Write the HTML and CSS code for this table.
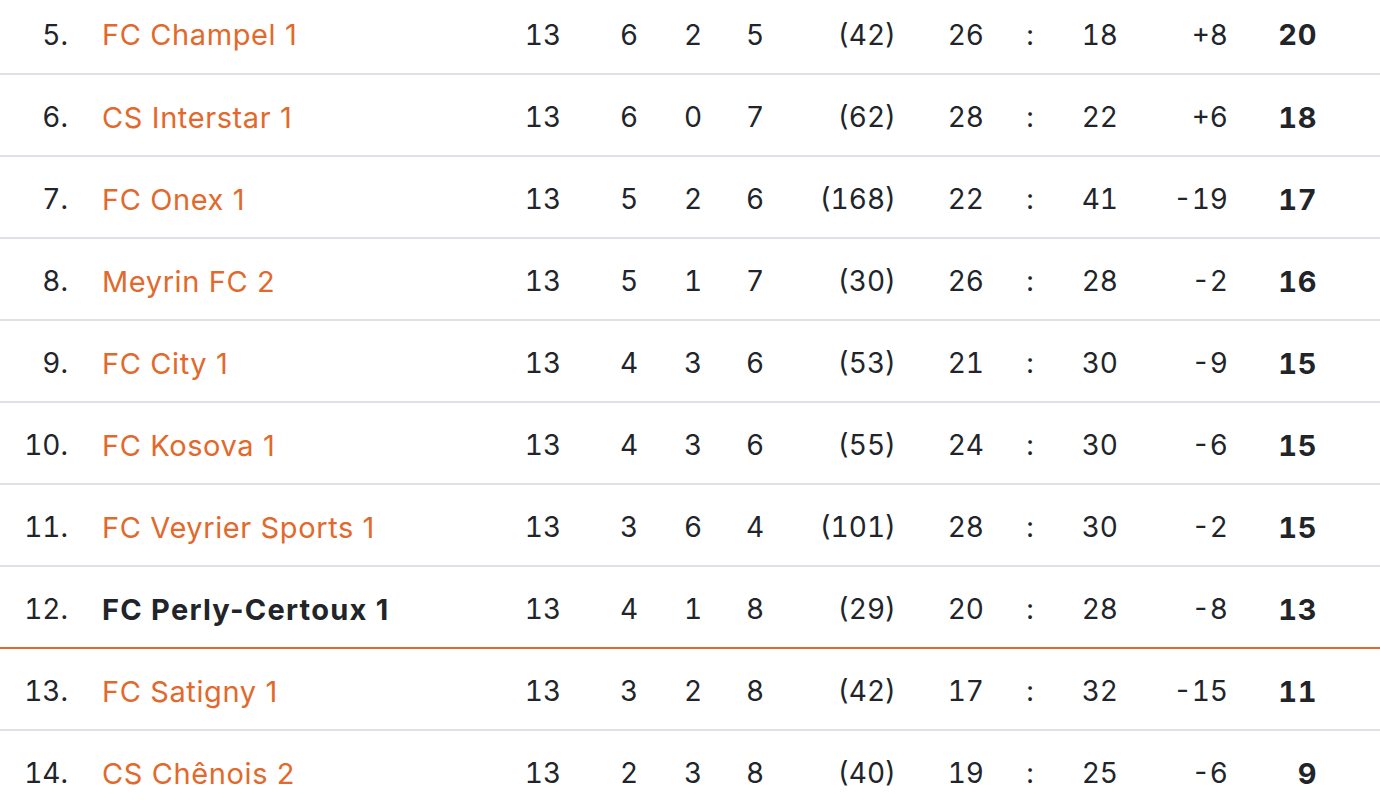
FILE: index.html
```html
<!DOCTYPE html>
<html lang="fr">
<head>
<meta charset="utf-8">
<title>Classement</title>
<link rel="stylesheet" href="styles.css">
</head>
<body>
<table class="standings">
  <colgroup>
    <col class="c-rank"><col class="c-team"><col class="c-p"><col class="c-w"><col class="c-d"><col class="c-l"><col class="c-fp"><col class="c-gf"><col class="c-colon"><col class="c-ga"><col class="c-diff"><col class="c-pts">
  </colgroup>
  <tbody>
    <tr><td class="rank">5.</td><td class="team"><a href="#">FC Champel 1</a></td><td class="ctr">13</td><td class="ctr">6</td><td class="ctr">2</td><td class="ctr">5</td><td class="num">(42)</td><td class="num">26</td><td class="ctr">:</td><td class="num">18</td><td class="num">+8</td><td class="pts">20</td></tr>
    <tr><td class="rank">6.</td><td class="team"><a href="#">CS Interstar 1</a></td><td class="ctr">13</td><td class="ctr">6</td><td class="ctr">0</td><td class="ctr">7</td><td class="num">(62)</td><td class="num">28</td><td class="ctr">:</td><td class="num">22</td><td class="num">+6</td><td class="pts">18</td></tr>
    <tr><td class="rank">7.</td><td class="team"><a href="#">FC Onex 1</a></td><td class="ctr">13</td><td class="ctr">5</td><td class="ctr">2</td><td class="ctr">6</td><td class="num">(168)</td><td class="num">22</td><td class="ctr">:</td><td class="num">41</td><td class="num">-19</td><td class="pts">17</td></tr>
    <tr><td class="rank">8.</td><td class="team"><a href="#">Meyrin FC 2</a></td><td class="ctr">13</td><td class="ctr">5</td><td class="ctr">1</td><td class="ctr">7</td><td class="num">(30)</td><td class="num">26</td><td class="ctr">:</td><td class="num">28</td><td class="num">-2</td><td class="pts">16</td></tr>
    <tr><td class="rank">9.</td><td class="team"><a href="#">FC City 1</a></td><td class="ctr">13</td><td class="ctr">4</td><td class="ctr">3</td><td class="ctr">6</td><td class="num">(53)</td><td class="num">21</td><td class="ctr">:</td><td class="num">30</td><td class="num">-9</td><td class="pts">15</td></tr>
    <tr><td class="rank">10.</td><td class="team"><a href="#">FC Kosova 1</a></td><td class="ctr">13</td><td class="ctr">4</td><td class="ctr">3</td><td class="ctr">6</td><td class="num">(55)</td><td class="num">24</td><td class="ctr">:</td><td class="num">30</td><td class="num">-6</td><td class="pts">15</td></tr>
    <tr><td class="rank">11.</td><td class="team"><a href="#">FC Veyrier Sports 1</a></td><td class="ctr">13</td><td class="ctr">3</td><td class="ctr">6</td><td class="ctr">4</td><td class="num">(101)</td><td class="num">28</td><td class="ctr">:</td><td class="num">30</td><td class="num">-2</td><td class="pts">15</td></tr>
    <tr class="own cutoff"><td class="rank">12.</td><td class="team"><span class="own-name">FC Perly-Certoux 1</span></td><td class="ctr">13</td><td class="ctr">4</td><td class="ctr">1</td><td class="ctr">8</td><td class="num">(29)</td><td class="num">20</td><td class="ctr">:</td><td class="num">28</td><td class="num">-8</td><td class="pts">13</td></tr>
    <tr><td class="rank">13.</td><td class="team"><a href="#">FC Satigny 1</a></td><td class="ctr">13</td><td class="ctr">3</td><td class="ctr">2</td><td class="ctr">8</td><td class="num">(42)</td><td class="num">17</td><td class="ctr">:</td><td class="num">32</td><td class="num">-15</td><td class="pts">11</td></tr>
    <tr><td class="rank">14.</td><td class="team"><a href="#">CS Chênois 2</a></td><td class="ctr">13</td><td class="ctr">2</td><td class="ctr">3</td><td class="ctr">8</td><td class="num">(40)</td><td class="num">19</td><td class="ctr">:</td><td class="num">25</td><td class="num">-6</td><td class="pts">9</td></tr>
  </tbody>
</table>
</body>
</html>
```
FILE: styles.css
```css
html, body {
  margin: 0;
  padding: 0;
  background: #ffffff;
}

body {
  font-family: Inter, "Liberation Sans", Arial, sans-serif;
  font-size: 28px;
  font-variant-numeric: tabular-nums;
  color: #212529;
  overflow: hidden;
}

.standings {
  width: 1380px;
  table-layout: fixed;
  border-collapse: collapse;
  margin-top: -8px;
}

.c-rank { width: 68px; }
.c-team { width: 442px; }
.c-p { width: 66px; }
.c-w { width: 106px; }
.c-d { width: 22px; }
.c-l { width: 102px; }
.c-fp { width: 90px; }
.c-gf { width: 88px; }
.c-colon { width: 92px; }
.c-ga { width: 42px; }
.c-diff { width: 110px; }
.c-pts { width: 152px; }

.standings tr {
  border-bottom: 2px solid #dee2e6;
}

.standings tr.cutoff {
  border-bottom-color: #e2692b;
}

.standings td {
  height: 82px;
  box-sizing: border-box;
  padding: 6px 0 0 0;
  vertical-align: middle;
  white-space: nowrap;
  line-height: 1.2;
}

.rank { text-align: right; }

.standings td.team {
  padding-left: 34px;
  text-align: left;
  font-size: 29px;
  letter-spacing: 0.6px;
  font-variant-numeric: normal;
}

.team a {
  color: #e2692b;
  text-decoration: none;
}

.own-name {
  font-weight: 700;
  letter-spacing: 1.25px;
}

.ctr { text-align: center; }

.num { text-align: right; }

.standings td.pts {
  text-align: right;
  font-weight: 700;
  font-size: 29px;
  letter-spacing: 0.6px;
  padding-right: 63px;
}
```
